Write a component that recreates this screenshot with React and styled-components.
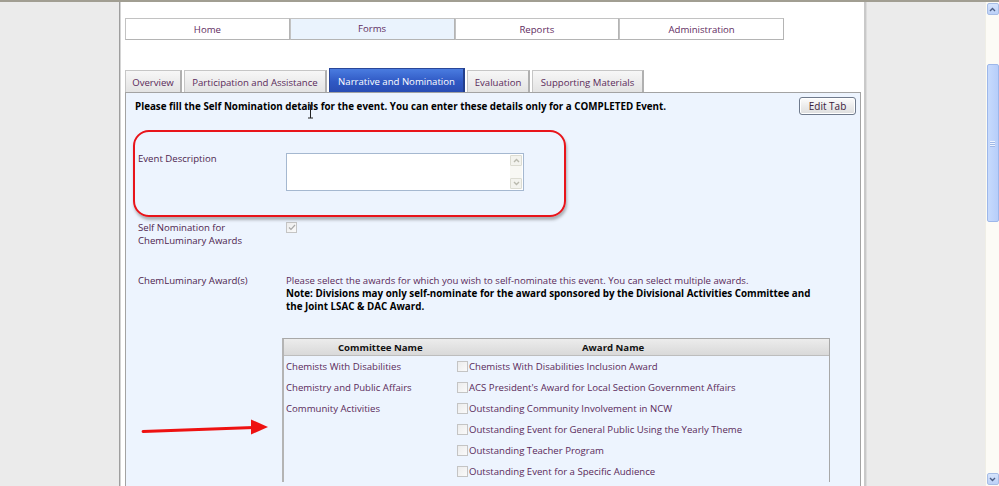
import React from "react";
import styled, { createGlobalStyle } from "styled-components";

const Global = createGlobalStyle`
  html, body { margin: 0; padding: 0; background: #ebebeb; }
  body { font-family: "Open Sans", "Noto Sans", sans-serif; }
  * { box-sizing: border-box; }
`;

const Root = styled.div`
  width: 999px;
  height: 486px;
  overflow: hidden;
  display: flex;
  flex-direction: column;
  background: #ebebeb;
`;

const TopEdge = styled.div`
  height: 2px;
  flex: none;
  background: #a19e92;
`;

const Main = styled.div`
  flex: 1;
  min-height: 0;
  display: flex;
`;

const LeftGutter = styled.div`
  width: 120px;
  flex: none;
  background: #ebebeb;
  border-right: 1px solid #9e9e9e;
`;

const Page = styled.div`
  width: 744px;
  flex: none;
  background: #fff;
  border-left: 1px solid #d4d4d4;
  padding: 16px 3px 0 4px;
  display: flex;
  flex-direction: column;
`;

const RightGutter = styled.div`
  flex: 1;
  background: #ebebeb;
  border-left: 2px solid #c9c9c9;
  box-shadow: inset 1px 0 0 #dcdcdc;
`;

const Scrollbar = styled.div`
  width: 14px;
  flex: none;
  background: #fcfbf6;
  border-left: 1px solid #efeee6;
  display: flex;
  flex-direction: column;
  align-items: center;
  padding: 1px 0 1px;
`;

const ScrollBtn = styled.div`
  width: 12px;
  height: 12px;
  border: 1px solid #a7bde6;
  border-radius: 2px;
  background: linear-gradient(#d6e4fc, #bcd1f8);
  display: flex;
  align-items: center;
  justify-content: center;
  margin-top: ${(p) => (p.$down ? "auto" : "0")};
`;

const Thumb = styled.div`
  width: 12px;
  height: 158px;
  margin-top: 49px;
  border: 1px solid #9db7ea;
  border-radius: 2px;
  background: linear-gradient(90deg, #c7dafc, #b7cefa);
  display: flex;
  flex-direction: column;
  align-items: center;
  justify-content: center;
  gap: 1px;
`;

const Grip = styled.span`
  width: 5px;
  height: 1px;
  background: #eef4ff;
  box-shadow: 0 1px 0 #9fb8e6;
`;

const Nav = styled.div`
  display: grid;
  grid-template-columns: repeat(4, 1fr);
  width: 659px;
  height: 22px;
  flex: none;
`;

const NavItem = styled.div`
  border: 1px solid #c2c2c2;
  border-right-color: #b4b4b4;
  border-bottom-color: #b4b4b4;
  background: ${(p) => (p.$active ? "#eaf3fd" : "#fff")};
  display: flex;
  align-items: center;
  justify-content: center;
  font-size: 9.6px;
  color: #5f2c5f;
  padding-bottom: ${(p) => (p.$active ? "2px" : "0")};
`;

const TabRow = styled.div`
  display: flex;
  align-items: flex-end;
  gap: 2px;
  height: 24px;
  margin-top: 28px;
  flex: none;
`;

const Tab = styled.div`
  width: ${(p) => p.$w}px;
  height: ${(p) => (p.$active ? 24 : 22)}px;
  display: flex;
  align-items: center;
  justify-content: center;
  font-size: 9.6px;
  color: ${(p) => (p.$active ? "#fff" : "#5a2a5a")};
  background: ${(p) =>
    p.$active
      ? "linear-gradient(#4a7ce0, #3059c4 55%, #2a4db3)"
      : "linear-gradient(#f7f7f7, #e3e3e3)"};
  border: 1px solid ${(p) => (p.$active ? "#2a4799" : "#c6c6c6")};
  border-right: 2px solid ${(p) => (p.$active ? "#233f8c" : "#b0b0b0")};
  border-bottom: none;
  padding-top: 1px;
`;

const Panel = styled.div`
  position: relative;
  flex: 1;
  min-height: 0;
  overflow: hidden;
  background: #edf4fe;
  border: 1px solid #a3a3a3;
  border-bottom: none;
`;

const PanelHeader = styled.div`
  display: flex;
  justify-content: space-between;
  align-items: center;
  padding: 4px 4px 0 9px;
`;

const Instruction = styled.div`
  font-weight: 700;
  font-size: 9.8px;
  color: #000;
  white-space: nowrap;
`;

const Button = styled.button`
  width: 57px;
  height: 18px;
  border: 1px solid #6f7a8c;
  border-radius: 3px;
  background: linear-gradient(#fdfdfd, #ececec 50%, #dedede);
  font-family: inherit;
  font-size: 10px;
  color: #3a203a;
  padding: 0;
  box-shadow: inset 0 0 0 1px #fff;
`;

const FormRow = styled.div`
  display: grid;
  grid-template-columns: 148px 1fr;
  padding-left: 12px;
  margin-top: ${(p) => p.$top}px;
`;

const Label = styled.div`
  font-size: 9.6px;
  line-height: 13px;
  color: #4e244e;
`;

const FakeTextArea = styled.div`
  width: 238px;
  height: 38px;
  margin-top: 1px;
  border: 1px solid #a5b8d0;
  background: #fff;
  display: flex;
  justify-content: flex-end;
  padding: 1px 1px 1px 0;
`;

const MiniScroll = styled.div`
  width: 12px;
  display: flex;
  flex-direction: column;
  justify-content: space-between;
  background: #f8f8f4;
`;

const MiniBtn = styled.div`
  height: 11px;
  border: 1px solid #dcdcd2;
  border-radius: 1px;
  background: #f3f3ee;
  display: flex;
  align-items: center;
  justify-content: center;
`;

const CheckCell = styled.div`
  display: flex;
  align-items: flex-start;
  padding-top: 1px;
`;

const Check = styled.span`
  width: 11px;
  height: 11px;
  flex: none;
  border: 1px solid #c4c4c4;
  background: linear-gradient(135deg, #ececec, #fafafa);
  display: flex;
  align-items: center;
  justify-content: center;
`;

const Text = styled.div`
  font-size: 9.6px;
  line-height: 13px;
  color: #5a2a5a;
`;

const Note = styled.div`
  font-size: 9.8px;
  line-height: 13px;
  font-weight: 700;
  color: #000;
  width: 535px;
`;

const TableWrap = styled.div`
  padding-left: 156px;
  margin-top: 25px;
`;

const AwardTable = styled.div`
  width: 548px;
  border: 1px solid #a8a8a8;
  border-left: 2px solid #b4b4b4;
  border-bottom: none;
  display: grid;
  grid-template-columns: 171px 1fr;
  grid-template-rows: 17px;
  grid-auto-rows: 21px;
`;

const HeadCell = styled.div`
  background: linear-gradient(#ececec, #d9d9d9);
  border-bottom: 1px solid #bdbdbd;
  font-weight: 700;
  font-size: 9.6px;
  color: #111;
  display: flex;
  align-items: center;
  padding-left: ${(p) => p.$pad}px;
`;

const Cell = styled.div`
  display: flex;
  align-items: center;
  gap: 1px;
  font-size: 9.6px;
  color: #5a2a5a;
  padding-left: ${(p) => p.$pad}px;
  white-space: nowrap;
`;

const Annotation = styled.div`
  position: absolute;
  left: 7px;
  top: 37px;
  width: 433px;
  height: 87px;
  border: 2px solid #e8141a;
  border-radius: 16px;
  box-shadow: 1px 3px 3px rgba(90, 90, 90, 0.45);
  pointer-events: none;
`;

const ArrowSvg = styled.svg`
  position: absolute;
  left: 14px;
  top: 324px;
`;

const Cursor = styled.svg`
  position: absolute;
  left: 181px;
  top: 11px;
`;

const Caret = ({ up, color = "#4d5f86", size = 7 }) => (
  <svg width={size} height={size - 2} viewBox="0 0 7 5">
    <path
      d={up ? "M1 4 L3.5 1.5 L6 4" : "M1 1 L3.5 3.5 L6 1"}
      fill="none"
      stroke={color}
      strokeWidth="1.4"
    />
  </svg>
);

const tabs = [
  { label: "Overview", w: 57 },
  { label: "Participation and Assistance", w: 143 },
  { label: "Narrative and Nomination", w: 136, active: true },
  { label: "Evaluation", w: 63 },
  { label: "Supporting Materials", w: 112 },
];

const rows = [
  ["Chemists With Disabilities", "Chemists With Disabilities Inclusion Award"],
  ["Chemistry and Public Affairs", "ACS President's Award for Local Section Government Affairs"],
  ["Community Activities", "Outstanding Community Involvement in NCW"],
  ["", "Outstanding Event for General Public Using the Yearly Theme"],
  ["", "Outstanding Teacher Program"],
  ["", "Outstanding Event for a Specific Audience"],
];

export default function App() {
  return (
    <Root>
      <Global />
      <TopEdge />
      <Main>
        <LeftGutter />
        <Page>
          <Nav>
            <NavItem>Home</NavItem>
            <NavItem $active>Forms</NavItem>
            <NavItem>Reports</NavItem>
            <NavItem>Administration</NavItem>
          </Nav>
          <TabRow>
            {tabs.map((t) => (
              <Tab key={t.label} $w={t.w} $active={t.active}>
                {t.label}
              </Tab>
            ))}
          </TabRow>
          <Panel>
            <PanelHeader>
              <Instruction>
                Please fill the Self Nomination details for the event. You can enter these details only for a COMPLETED Event.
              </Instruction>
              <Button>Edit Tab</Button>
            </PanelHeader>

            <FormRow $top={37}>
              <Label>Event Description</Label>
              <FakeTextArea>
                <MiniScroll>
                  <MiniBtn>
                    <Caret up color="#b9b9ae" />
                  </MiniBtn>
                  <MiniBtn>
                    <Caret color="#b9b9ae" />
                  </MiniBtn>
                </MiniScroll>
              </FakeTextArea>
            </FormRow>

            <FormRow $top={30}>
              <Label>
                Self Nomination for
                <br />
                ChemLuminary Awards
              </Label>
              <CheckCell>
                <Check>
                  <svg width="8" height="7" viewBox="0 0 8 7">
                    <path d="M1 3.5 L3 5.5 L7 1" fill="none" stroke="#a9a9a9" strokeWidth="1.2" />
                  </svg>
                </Check>
              </CheckCell>
            </FormRow>

            <FormRow $top={27}>
              <Label>ChemLuminary Award(s)</Label>
              <div>
                <Text>
                  Please select the awards for which you wish to self-nominate this event. You can select multiple awards.
                </Text>
                <Note>
                  Note: Divisions may only self-nominate for the award sponsored by the Divisional Activities Committee and the Joint LSAC &amp; DAC Award.
                </Note>
              </div>
            </FormRow>

            <TableWrap>
              <AwardTable>
                <HeadCell $pad={54}>Committee Name</HeadCell>
                <HeadCell $pad={127}>Award Name</HeadCell>
                {rows.map(([c, a], i) => (
                  <React.Fragment key={i}>
                    <Cell $pad={2}>{c}</Cell>
                    <Cell $pad={2}>
                      <Check />
                      {a}
                    </Cell>
                  </React.Fragment>
                ))}
              </AwardTable>
            </TableWrap>

            <Annotation />
            <ArrowSvg width="130" height="20" viewBox="0 0 130 20">
              <path d="M3 14.5 L114 10.5" stroke="#ee1111" strokeWidth="2.8" strokeLinecap="round" />
              <polygon points="111,2.5 128,10 111,17.5" fill="#ee1111" />
            </ArrowSvg>
            <Cursor width="7" height="15" viewBox="0 0 7 15">
              <path d="M1 1 H6 M3.5 1 V14 M1 14 H6" stroke="#222" strokeWidth="1" fill="none" />
            </Cursor>
          </Panel>
        </Page>
        <RightGutter />
        <Scrollbar>
          <ScrollBtn>
            <Caret up />
          </ScrollBtn>
          <Thumb>
            <Grip />
            <Grip />
            <Grip />
          </Thumb>
          <ScrollBtn $down>
            <Caret />
          </ScrollBtn>
        </Scrollbar>
      </Main>
    </Root>
  );
}
